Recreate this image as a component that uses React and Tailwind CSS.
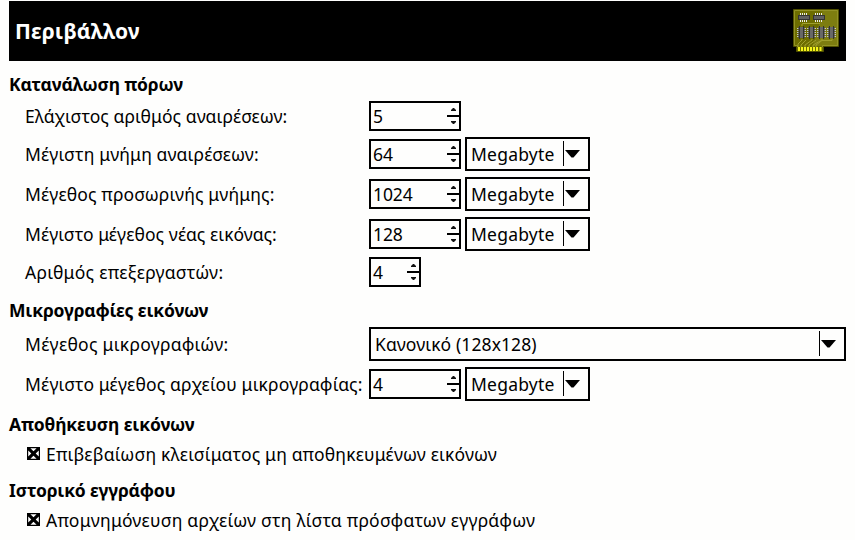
import React from 'react';

function Heading({ children, className = '', track }) {
  return <h2 className={`h-10 shrink-0 whitespace-nowrap pt-[11px] text-[17.5px] font-bold leading-6 ${className} ${track}`}>{children}</h2>;
}

function Label({ children, track }) {
  return <span className={`w-[344px] shrink-0 whitespace-nowrap text-[17.5px] ${track}`}>{children}</span>;
}

function Spin({ value, small = false }) {
  return (
    <div className={`flex h-[30px] shrink-0 items-center justify-between border-2 border-black pl-0.5 ${small ? 'w-[52px]' : 'w-[92px]'}`}>
      <span className="text-[17.5px] tracking-[-0.1px]">{value}</span>
      <svg width="12" height="26" viewBox="0 0 12 26">
        <path d="M0 12H12V14H0Z" fill="#000" />
        <path d="M4 8V7L6 5H7L9 7V8ZM4 18V19L6 21H7L9 19V18Z" fill="#111" />
      </svg>
    </div>
  );
}

function Combo({ children, wide = false, track = 'tracking-[0.22px]' }) {
  return (
    <div className={`flex h-[34px] shrink-0 items-center justify-between border-2 border-black pl-1 ${wide ? 'w-[477px]' : 'ml-1 w-[125px]'}`}>
      <span className={`whitespace-nowrap text-[17.5px] ${track}`}>{children}</span>
      <svg width="25" height="30" viewBox="0 0 25 30">
        <path d="M0 2H1V27H0Z" fill="#000" />
        <path d="M2 11H17L10.5 18.5H8.5Z" fill="#000" />
      </svg>
    </div>
  );
}

function Row({ children, tall = true }) {
  return <div className={`flex shrink-0 items-center pl-4 ${tall ? 'h-10' : 'h-[30px]'}`}>{children}</div>;
}

function Check({ children, track }) {
  return (
    <label className="flex h-[30px] shrink-0 items-center pl-[18px] text-[17.5px]">
      <svg width="13" height="13" viewBox="0 0 13 13" className="mb-px mr-1.5">
        <path d="M0 0H13V13H0Z" fill="#000" />
        <path d="M3.4 1.2H9.6L6.5 4.3ZM3.4 11.8H9.6L6.5 8.7ZM1.2 3.4V9.6L4.3 6.5ZM11.8 3.4V9.6L8.7 6.5Z" fill="#fff" />
      </svg>
      <span className={`whitespace-nowrap ${track}`}>{children}</span>
    </label>
  );
}

function HorizontalChip({ x, y }) {
  return (
    <g transform={`translate(${x} ${y})`}>
      <path d="M2.5 0V9M4.5 0V9M6.5 0V9M8.5 0V9" stroke="#ececec" />
      <path d="M0 2H12V7H0Z" fill="#333" />
      <path d="M1 3H11V6H1Z" fill="#606060" />
    </g>
  );
}

function VerticalChip({ x, y }) {
  return (
    <g transform={`translate(${x} ${y})`}>
      <path d="M0 2.5H9M0 4.5H9M0 6.5H9M0 8.5H9M0 10.5H9" stroke="#c8c8c8" />
      <path d="M2 0H3V1H6V0H7V13H6V12H3V13H2Z" fill="#333" />
      <path d="M3 1H6V12H3Z" fill="#686868" />
      <path d="M1.5 1V12M7.5 1V12" stroke="#444" strokeOpacity=".6" />
    </g>
  );
}

function Board() {
  return (
    <svg width="46" height="44" viewBox="0 0 46 44">
      <path d="M.5 .5H45.5V37.5H30.5V42.5H3.5V37.5H.5Z" fill="#6d6d00" stroke="#515100" />
      <path d="M30 1H45V37H20Z" fill="#7d7d10" />
      <path d="M4.5 38V36.5H1.5V1.5H44.5V36.5H29.5V38" fill="none" stroke="#929225" />
      <path d="M9 17V15L10 14.5H27M9 30V31L5 35V38M19 30V31L12 36V38M29 30V31L20 36V38M39 30V31.5H29L23 36V38M13 31L8 36V38M23 31L16 36V38" fill="none" stroke="#a0a02d" />
      <HorizontalChip x="5" y="4" />
      <HorizontalChip x="20" y="4" />
      <VerticalChip x="4" y="17" />
      <VerticalChip x="14" y="17" />
      <VerticalChip x="24" y="17" />
      <VerticalChip x="34" y="17" />
      <path d="M6 38V42M9 38V42M12 38V42M15 38V42M18 38V42M21 38V42M24 38V42M27.5 38V42" stroke="#f4f41c" strokeWidth="2" />
    </svg>
  );
}

export default function App() {
  return (
    <main className="flex h-[540px] w-[855px] flex-col overflow-hidden bg-[#fefefd] pl-[9px] pr-[9px] pt-px font-['Noto_Sans','Open_Sans',sans-serif] leading-6 text-black">
      <header className="flex h-[60px] shrink-0 items-center justify-between bg-black pl-1.5 pr-[7px] text-white">
        <h1 className="text-[21px] font-bold tracking-[0.15px]">Περιβάλλον</h1>
        <Board />
      </header>

      <Heading track="tracking-[-0.14px]">Κατανάλωση πόρων</Heading>
      <Row tall={false}><Label track="tracking-[0.07px]">Ελάχιστος αριθμός αναιρέσεων:</Label><Spin value="5" /></Row>
      <div className="h-[3px] shrink-0" />
      <Row><Label track="tracking-[0.13px]">Μέγιστη μνήμη αναιρέσεων:</Label><Spin value="64" /><Combo>Megabyte</Combo></Row>
      <Row><Label track="tracking-[0.12px]">Μέγεθος προσωρινής μνήμης:</Label><Spin value="1024" /><Combo>Megabyte</Combo></Row>
      <Row><Label track="tracking-[0.06px]">Μέγιστο μέγεθος νέας εικόνας:</Label><Spin value="128" /><Combo>Megabyte</Combo></Row>
      <div className="h-[3px] shrink-0" />
      <Row tall={false}><Label track="tracking-[0.27px]">Αριθμός επεξεργαστών:</Label><Spin value="4" small /></Row>

      <Heading className="-mb-[3px]" track="tracking-[-0.16px]">Μικρογραφίες εικόνων</Heading>
      <Row><Label track="tracking-[0.26px]">Μέγεθος μικρογραφιών:</Label><Combo wide track="tracking-[0.1px]">Κανονικό (128x128)</Combo></Row>
      <Row><Label track="tracking-[0.14px]">Μέγιστο μέγεθος αρχείου μικρογραφίας:</Label><Spin value="4" /><Combo>Megabyte</Combo></Row>

      <Heading className="-mt-[3px] mb-[-2px]" track="tracking-[-0.12px]">Αποθήκευση εικόνων</Heading>
      <Check track="tracking-[0.17px]">Επιβεβαίωση κλεισίματος μη αποθηκευμένων εικόνων</Check>
      <Heading className="-mt-[2px] mb-[-2px]" track="tracking-[-0.18px]">Ιστορικό εγγράφου</Heading>
      <Check track="tracking-[0.22px]">Απομνημόνευση αρχείων στη λίστα πρόσφατων εγγράφων</Check>
    </main>
  );
}
